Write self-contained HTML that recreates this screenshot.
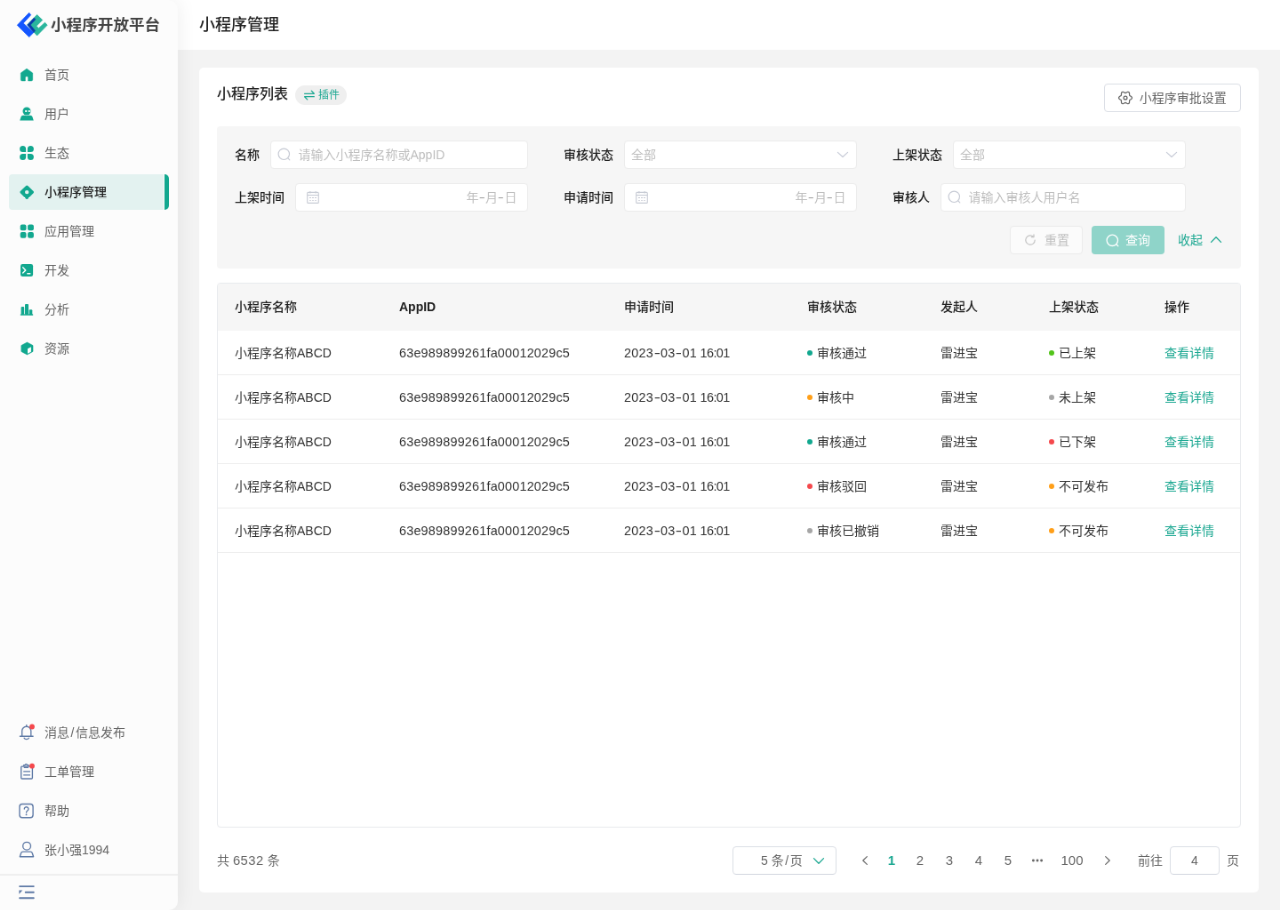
<!DOCTYPE html>
<html lang="zh-CN">
<head>
<meta charset="utf-8">
<title>小程序管理</title>
<style>
*{box-sizing:border-box;margin:0;padding:0}
html,body{width:1280px;height:910px;overflow:hidden;background:#f3f3f3}
body{position:relative}
#app{position:absolute;left:0;top:0;width:1440px;height:1024px;transform:scale(.888889);transform-origin:0 0;will-change:transform;background:#f3f3f3;font-family:"Liberation Sans","Noto Sans CJK SC",sans-serif;font-size:14px;color:#333}
.abs{position:absolute}
i{font-style:normal}
b{font-weight:inherit}
#header{position:absolute;left:0;top:0;width:1440px;height:56px;background:#fff}
#header h1{position:absolute;left:224px;top:0;line-height:56px;font-size:18px;font-weight:500;color:#222}
#side{position:absolute;left:0;top:0;width:200px;height:1024px;background:#fcfcfc;border-radius:0 10px 10px 0;box-shadow:0 0 22px rgba(0,0,0,.07)}
#logo{position:absolute;left:15.75px;top:11.25px;width:40.5px;height:33.75px}
#brand{position:absolute;left:57px;top:0;line-height:56px;font-size:17.6px;font-weight:700;color:#444;white-space:nowrap}
.mi{position:absolute;left:10px;width:180px;height:40px;border-radius:4px;line-height:40px;font-size:14px;color:#666;white-space:nowrap}
.mi svg{position:absolute;left:11px;top:11px;width:18px;height:18px}
.mi span{position:absolute;left:40px;top:0}
.mi.on{background:#e3f2f0;color:#222;font-weight:500}
.mi.on:after{content:"";position:absolute;right:0;top:0;width:5px;height:40px;background:#12a88f;border-radius:0 5px 5px 0}
.mi.on:before{content:"";position:absolute;right:5px;top:0;width:1px;height:40px;background:#fcfcfc}
#sdiv{position:absolute;left:0;top:983.4px;width:200px;height:1.6px;background:#efefef}
#fold{position:absolute;left:20px;top:994px;width:20px;height:20px}
#card{position:absolute;left:224px;top:76px;width:1192px;height:928px;background:#fff;border-radius:5px}
#ctitle{position:absolute;left:20px;top:18px;line-height:24px;font-size:16px;font-weight:500;color:#222}
#tag{position:absolute;left:108px;top:20px;width:58px;height:22px;border-radius:11px;background:#efefef;color:#1ea993;font-size:12px;line-height:22px}
#tag span{position:absolute;left:26px;top:0}
#tag svg{position:absolute;left:10px;top:5px;width:12px;height:12px}
#setbtn{position:absolute;left:1018px;top:18px;width:154px;height:32px;border:1px solid #dcdfe6;border-radius:4px;background:#fff;color:#666;font-size:14px;line-height:30px}
#setbtn span{position:absolute;left:38.7px;top:0;white-space:nowrap}
#setbtn svg{position:absolute;left:15px;top:7px;width:16px;height:16px}
#filter{position:absolute;left:20px;top:66px;width:1152px;height:160px;background:#f6f6f6;border-radius:4px}
.fl{position:absolute;line-height:32px;font-size:14px;font-weight:500;color:#222;white-space:nowrap}
.fi{position:absolute;height:32px;background:#fff;border:1px solid #ececec;border-radius:4px;font-size:14px;line-height:30px;color:#bfbfbf;white-space:nowrap}
.fi svg{position:absolute}
.fi .t{position:absolute;top:0}
.btn{position:absolute;height:32px;border-radius:4px;font-size:14px;line-height:30px;white-space:nowrap}
#table{position:absolute;left:20px;top:242px;width:1152px;height:613px;border:1px solid #e9ebee;border-radius:4px;overflow:hidden}
#thead{position:absolute;left:0;top:0;width:1150px;height:52.8px;background:#f6f6f6;font-weight:500;color:#222;line-height:52px}
.tr{position:absolute;left:0;width:1150px;height:50px;border-bottom:1px solid #eee;line-height:50.4px;color:#333}
.c{position:absolute;top:0;white-space:nowrap}
.c1{left:19px}.c2{left:204px}.c3{left:457px}.c4{left:663px}.c5{left:813px}.c6{left:935px}.c7{left:1065px}
.la{font-size:14.4px;letter-spacing:.2px}.ld{font-size:14.4px;letter-spacing:.28px;word-spacing:-.7px}.hy{display:inline-block;transform:scaleX(1.5);margin:0 1.4px}.tm{letter-spacing:-.6px}
.dot{display:inline-block;width:6px;height:6px;border-radius:50%;vertical-align:middle;margin:-2px 5px 0 0}
.lk{color:#1ea993}
#pager{position:absolute;left:0;top:876px;width:1192px;height:32px;line-height:32px;font-size:14px;color:#666}
#pager .p{position:absolute;top:0;white-space:nowrap}
#pager .n{position:absolute;top:0;width:40px;text-align:center;font-size:15px}
.box{position:absolute;top:0;height:32px;border:1px solid #dcdfe6;border-radius:4px;background:#fff;line-height:30px}
</style>
</head>
<body>
<div id="app">
<div id="header"><h1>小程序管理</h1></div>

<div id="side">
  <svg id="logo" viewBox="14 10 36 30"><path d="M28.84 12.97 L30.6 15.1 L23.0 23.4 L33.3 32.75 L28.84 37.2 L16.97 25.33 Z" fill="#1456ff" stroke="#1456ff" stroke-width=".7" stroke-linejoin="round"/><path d="M36.75 14.95 L42.19 20.22 L36.09 26.32 L38.4 28.46 L44.66 22.69 L46.97 25.33 L36.75 35.72 L27.02 25.0 Z" fill="#2ab69d" stroke="#2ab69d" stroke-width=".7" stroke-linejoin="round"/><path d="M33.78 17.91 L35.43 19.56 L30.3 25.2 L35.1 30.94 L33.45 32.75 L27.02 25.0 Z" fill="#0b3bab" stroke="#0b3bab" stroke-width=".3" stroke-linejoin="round"/></svg>
  <div id="brand">小程序开放平台</div>
  <div class="mi" style="top:64px"><svg viewBox="0 0 18 18" style="" ><path d="M9 2.2 L15.7 7 V14.5 a1.4 1.4 0 0 1 -1.4 1.4 H10.6 V12.3 a1.6 1.6 0 0 0 -3.2 0 V15.9 H3.7 a1.4 1.4 0 0 1 -1.4 -1.4 V7 Z" fill="#12a88f" stroke="#12a88f" stroke-width=".5" stroke-linejoin="round"/></svg><span>首页</span></div>
  <div class="mi" style="top:108px"><svg viewBox="0 0 18 18" style="" ><circle cx="9" cy="6" r="4.5" fill="#12a88f"/><path d="M1.25 16.5 L2.6 12.3 a2.2 2.2 0 0 1 2.1 -1.6 H13.3 a2.2 2.2 0 0 1 2.1 1.6 L16.75 16.5 Z" fill="#12a88f"/><rect x="7.1" y="4.9" width="2.2" height="2" rx=".7" fill="#fff"/><rect x="10.7" y="4.9" width="2.2" height="2" rx=".7" fill="#fff"/><path d="M7.4 10.6 a1.7 .8 0 0 0 3.2 0 Z" fill="#fcfcfc" opacity=".6"/></svg><span>用户</span></div>
  <div class="mi" style="top:152px"><svg viewBox="0 0 18 18" style="" ><path d="M8.1 8.1 H4.6 A3.5 3.5 0 1 1 8.1 4.6 Z M9.9 8.1 H13.4 A3.5 3.5 0 1 0 9.9 4.6 Z M8.1 9.9 H4.6 A3.5 3.5 0 1 0 8.1 13.4 Z M9.9 9.9 H13.4 A3.5 3.5 0 1 1 9.9 13.4 Z" fill="#12a88f"/></svg><span>生态</span></div>
  <div class="mi on" style="top:196px"><svg viewBox="0 0 18 18" style="" ><path fill-rule="evenodd" fill="#12a88f" d="M9.2 1.3 m0 0 M8.1 1.9 a1.6 1.6 0 0 1 2.2 0 L16.5 8 a1.6 1.6 0 0 1 0 2.2 L10.3 16.4 a1.6 1.6 0 0 1 -2.2 0 L1.9 10.2 a1.6 1.6 0 0 1 0 -2.2 Z M9.2 6.9 a2.2 2.2 0 1 0 0 4.4 a2.2 2.2 0 1 0 0 -4.4 Z"/></svg><span>小程序管理</span></div>
  <div class="mi" style="top:240px"><svg viewBox="0 0 18 18" style="" ><g fill="#12a88f"><rect x="1.7" y="1.5" width="6.8" height="6.8" rx="2"/><rect x="10.1" y="1.5" width="6.8" height="6.8" rx="2"/><rect x="1.7" y="9.9" width="6.8" height="6.8" rx="2"/><rect x="10.1" y="9.9" width="6.8" height="6.8" rx="2"/></g></svg><span>应用管理</span></div>
  <div class="mi" style="top:284px"><svg viewBox="0 0 18 18" style="" ><rect x="2" y="1.9" width="14.1" height="14.1" rx="2.3" fill="#12a88f"/><path d="M4.7 5.8 L7.8 8.9 L4.7 12" fill="none" stroke="#fff" stroke-width="1.4" stroke-linecap="round" stroke-linejoin="round"/><path d="M9.8 12.7 H12.8" stroke="#fff" stroke-width="1.4" stroke-linecap="round"/></svg><span>开发</span></div>
  <div class="mi" style="top:328px"><svg viewBox="0 0 18 18" style="" ><g fill="#12a88f"><rect x="2.6" y="6.1" width="3.6" height="9" rx="1"/><rect x="7" y="2.9" width="4" height="12" rx="1"/><rect x="11.7" y="9.2" width="3.6" height="6" rx="1"/><rect x="1.8" y="14.2" width="14.4" height="1.6" rx=".6"/></g></svg><span>分析</span></div>
  <div class="mi" style="top:372px"><svg viewBox="0 0 18 18" style="" ><path d="M9.45 2.1 L16 5.6 V12.4 L9.45 15.9 L2.9 12.4 V5.6 Z" fill="#12a88f" stroke="#12a88f" stroke-width=".6" stroke-linejoin="round"/><path d="M10.0 9.3 L13.9 7.2 V12.7 L10.0 14.8 Z" fill="#fff"/></svg><span>资源</span></div>
  <div class="mi" style="top:804px"><svg viewBox="0 0 18 18" style="overflow:visible" ><g fill="none" stroke="#5f7aa6" stroke-width="1.35" stroke-linecap="round" stroke-linejoin="round"><path d="M3.7 13.2 V7.3 a5.05 5.05 0 0 1 10.1 0 V13.2"/><path d="M1.4 13.2 H16.1"/><path d="M8.75 2.1 V.6"/><path d="M6.1 15.3 a2.8 2 0 0 0 5.3 0"/></g><circle cx="15" cy="2.5" r="2.9" fill="#f5484c"/></svg><span>消息<i style="margin:0 1.6px">/</i>信息发布</span></div>
  <div class="mi" style="top:848px"><svg viewBox="0 0 18 18" style="overflow:visible" ><g fill="none" stroke="#5f7aa6" stroke-width="1.35" stroke-linejoin="round"><rect x="2.7" y="3.1" width="12.7" height="13.9" rx="1"/><path d="M5.7 3.1 V1.6 H7.2 a1.2 1.2 0 0 1 2.3 0 H11 V3.1" /><path d="M5.7 4.4 H11" /><path d="M5.2 8.8 H13 M5.2 12.8 H13"/></g><circle cx="15" cy="2.7" r="2.9" fill="#f5484c"/></svg><span>工单管理</span></div>
  <div class="mi" style="top:892px"><svg viewBox="0 0 18 18" style="overflow:visible" ><g fill="none" stroke="#5f7aa6" stroke-width="1.35" stroke-linecap="round" stroke-linejoin="round"><rect x=".95" y="1.45" width="15.15" height="15.25" rx="3"/><path d="M6.3 7 a2.3 2.3 0 1 1 3.5 2 c-.9 .55 -1.25 1 -1.25 2"/></g><circle cx="8.55" cy="13.4" r=".9" fill="#5f7aa6"/></svg><span>帮助</span></div>
  <div class="mi" style="top:936px"><svg viewBox="0 0 18 18" style="overflow:visible" ><g fill="none" stroke="#5f7aa6" stroke-width="1.35" stroke-linejoin="round"><circle cx="9.1" cy="4.7" r="4.4"/><path d="M1.3 16.7 L2.6 12.7 a2.2 2.2 0 0 1 2.1 -1.6 H13.2 a2.2 2.2 0 0 1 2.1 1.6 L16.6 16.7 Z"/></g></svg><span>张小强1994</span></div>
  <div id="sdiv"></div>
  <svg id="fold" viewBox="0 0 20 20"><g stroke="#5f7aa6" stroke-width="1.9" stroke-linecap="round"><path d="M2.1 3.1 H17.8 M8.7 9.7 H17.8 M2.1 16.3 H17.8"/></g><path d="M1.4 7.4 H5.3 L1.4 11.8 Z" fill="#5f7aa6"/></svg>
</div>

<div id="card">
  <div id="ctitle">小程序列表</div>
  <div id="tag"><svg viewBox="0 0 12 12" style="" ><g fill="none" stroke="#1ea993" stroke-width="1.3" stroke-linecap="round" stroke-linejoin="round"><path d="M.6 4.3 H11.3 L8.3 1.1"/><path d="M11.3 7.7 H.6 L3.7 10.9"/></g></svg><span>插件</span></div>
  <div id="setbtn"><svg viewBox="0 0 16 16" style="overflow:visible" ><path d="M15.45 8.00 L15.29 8.64 L14.84 9.21 L14.23 9.67 L13.59 10.04 L13.06 10.36 L12.72 10.72 L12.57 11.20 L12.56 11.82 L12.56 12.56 L12.47 13.32 L12.20 13.99 L11.73 14.45 L11.09 14.63 L10.38 14.53 L9.67 14.23 L9.03 13.86 L8.49 13.56 L8.00 13.45 L7.51 13.56 L6.97 13.86 L6.33 14.23 L5.62 14.53 L4.91 14.63 L4.28 14.45 L3.80 13.99 L3.53 13.32 L3.44 12.56 L3.44 11.82 L3.43 11.20 L3.28 10.72 L2.94 10.36 L2.41 10.04 L1.77 9.67 L1.16 9.21 L0.71 8.64 L0.55 8.00 L0.71 7.36 L1.16 6.79 L1.77 6.33 L2.41 5.96 L2.94 5.64 L3.28 5.27 L3.43 4.80 L3.44 4.18 L3.44 3.44 L3.53 2.68 L3.80 2.01 L4.27 1.55 L4.91 1.37 L5.62 1.47 L6.33 1.77 L6.97 2.14 L7.51 2.44 L8.00 2.55 L8.49 2.44 L9.03 2.14 L9.67 1.77 L10.38 1.47 L11.09 1.37 L11.73 1.55 L12.20 2.01 L12.47 2.68 L12.56 3.44 L12.56 4.18 L12.57 4.80 L12.72 5.27 L13.06 5.64 L13.59 5.96 L14.23 6.33 L14.84 6.79 L15.29 7.36 L15.45 8.00Z" fill="none" stroke="#666" stroke-width="1.25" stroke-linejoin="round"/><circle cx="8" cy="8" r="1.95" fill="none" stroke="#666" stroke-width="1.25"/></svg><span>小程序审批设置</span></div>

  <div id="filter">
    <div class="fl" style="left:20px;top:16px">名称</div>
    <div class="fi" style="left:60px;top:16px;width:290px"><svg viewBox="0 0 16 16" style="left:7.2px;top:7px;width:16px;height:16px" ><g fill="none" stroke="#c6cad4" stroke-width="1.15" stroke-linecap="round"><circle cx="7.3" cy="7.3" r="6.2"/><path d="M11.9 11.9 L13.8 13.8"/></g></svg><span class="t" style="left:30.5px">请输入小程序名称或AppID</span></div>
    <div class="fl" style="left:390px;top:16px">审核状态</div>
    <div class="fi" style="left:458px;top:16px;width:262px"><span class="t" style="left:7px">全部</span><svg viewBox="0 0 12 6" style="right:9.2px;top:12.2px;width:12px;height:6px;overflow:visible" ><path d="M.4 .4 L6 5.5 L11.6 .4" fill="none" stroke="#c8ccd8" stroke-width="1.15" stroke-linecap="round" stroke-linejoin="round"/></svg></div>
    <div class="fl" style="left:760px;top:16px">上架状态</div>
    <div class="fi" style="left:828px;top:16px;width:262px"><span class="t" style="left:7px">全部</span><svg viewBox="0 0 12 6" style="right:9.2px;top:12.2px;width:12px;height:6px;overflow:visible" ><path d="M.4 .4 L6 5.5 L11.6 .4" fill="none" stroke="#c8ccd8" stroke-width="1.15" stroke-linecap="round" stroke-linejoin="round"/></svg></div>

    <div class="fl" style="left:20px;top:64px">上架时间</div>
    <div class="fi" style="left:88px;top:64px;width:262px"><svg viewBox="0 0 14 14" style="left:11.9px;top:8.3px;width:14px;height:14px;overflow:visible" ><g fill="none" stroke="#c8ccd5" stroke-width="1.1"><rect x=".7" y="1.4" width="12.6" height="12" rx="1"/><path d="M.7 4.5 H13.3"/><path d="M3.9 .1 V2.4 M10.1 .1 V2.4"/><path d="M3.2 7.5 H4.8 M6.2 7.5 H7.8 M9.2 7.5 H10.8 M3.2 10.5 H4.8 M6.2 10.5 H7.8 M9.2 10.5 H10.8" stroke-width=".9"/></g></svg><span class="t" style="right:11.5px">年<i class="hy">-</i>月<i class="hy">-</i>日</span></div>
    <div class="fl" style="left:390px;top:64px">申请时间</div>
    <div class="fi" style="left:458px;top:64px;width:262px"><svg viewBox="0 0 14 14" style="left:11.9px;top:8.3px;width:14px;height:14px;overflow:visible" ><g fill="none" stroke="#c8ccd5" stroke-width="1.1"><rect x=".7" y="1.4" width="12.6" height="12" rx="1"/><path d="M.7 4.5 H13.3"/><path d="M3.9 .1 V2.4 M10.1 .1 V2.4"/><path d="M3.2 7.5 H4.8 M6.2 7.5 H7.8 M9.2 7.5 H10.8 M3.2 10.5 H4.8 M6.2 10.5 H7.8 M9.2 10.5 H10.8" stroke-width=".9"/></g></svg><span class="t" style="right:11.5px">年<i class="hy">-</i>月<i class="hy">-</i>日</span></div>
    <div class="fl" style="left:760px;top:64px">审核人</div>
    <div class="fi" style="left:814px;top:64px;width:276px"><svg viewBox="0 0 16 16" style="left:7.2px;top:7px;width:16px;height:16px" ><g fill="none" stroke="#c6cad4" stroke-width="1.15" stroke-linecap="round"><circle cx="7.3" cy="7.3" r="6.2"/><path d="M11.9 11.9 L13.8 13.8"/></g></svg><span class="t" style="left:30.5px">请输入审核人用户名</span></div>

    <div class="btn" style="left:892px;top:112px;width:82px;border:1px solid #ececec;background:#fbfbfb;color:#c0c0c0"><svg viewBox="0 0 14 14" style="position:absolute;left:14.7px;top:7.5px;width:14px;height:14px;overflow:visible" ><g fill="none" stroke="#c4c4c4" stroke-width="1.2" stroke-linecap="round" stroke-linejoin="round"><path d="M12.2 7 a5.2 5.2 0 1 1 -1.6 -3.75"/><path d="M11 .9 V3.6 H8.3"/></g></svg><span class="abs" style="left:38px;top:0">重置</span></div>
    <div class="btn" style="left:984px;top:112px;width:82px;background:#8fd4c9;color:#fff;line-height:32px"><svg viewBox="0 0 16 16" style="position:absolute;left:15.7px;top:8.7px;width:16px;height:16px" ><g fill="none" stroke="#fff" stroke-width="1.3" stroke-linecap="round"><circle cx="7.3" cy="7.3" r="6.2"/><path d="M11.9 11.9 L13.8 13.8"/></g></svg><span class="abs" style="left:38px;top:0">查询</span></div>
    <div class="btn" style="left:1081px;top:112px;color:#1ea993;line-height:32px">收起<svg viewBox="0 0 12 7" style="position:absolute;left:37.3px;top:12px;width:12px;height:7px;overflow:visible" ><path d="M.5 6.4 L6 .8 L11.5 6.4" fill="none" stroke="#1ea993" stroke-width="1.3" stroke-linecap="round" stroke-linejoin="round"/></svg></div>
  </div>

  <div id="table">
    <div id="thead">
      <span class="c c1">小程序名称</span><span class="c c2" style="font-weight:700">AppID</span><span class="c c3">申请时间</span><span class="c c4">审核状态</span><span class="c c5">发起人</span><span class="c c6">上架状态</span><span class="c c7">操作</span>
    </div>
    <div class="tr" style="top:52.8px"><span class="c c1">小程序名称ABCD</span><span class="c c2 la">63e989899261fa00012029c5</span><span class="c c3 ld">2023<i class="hy">-</i>03<i class="hy">-</i>01 <i class="tm">16:01</i></span><span class="c c4"><i class="dot" style="background:#12a88f"></i>审核通过</span><span class="c c5">雷进宝</span><span class="c c6"><i class="dot" style="background:#52c41a"></i>已上架</span><span class="c c7 lk">查看详情</span></div>
    <div class="tr" style="top:102.8px"><span class="c c1">小程序名称ABCD</span><span class="c c2 la">63e989899261fa00012029c5</span><span class="c c3 ld">2023<i class="hy">-</i>03<i class="hy">-</i>01 <i class="tm">16:01</i></span><span class="c c4"><i class="dot" style="background:#ff9f18"></i>审核中</span><span class="c c5">雷进宝</span><span class="c c6"><i class="dot" style="background:#a6a6a6"></i>未上架</span><span class="c c7 lk">查看详情</span></div>
    <div class="tr" style="top:152.8px"><span class="c c1">小程序名称ABCD</span><span class="c c2 la">63e989899261fa00012029c5</span><span class="c c3 ld">2023<i class="hy">-</i>03<i class="hy">-</i>01 <i class="tm">16:01</i></span><span class="c c4"><i class="dot" style="background:#12a88f"></i>审核通过</span><span class="c c5">雷进宝</span><span class="c c6"><i class="dot" style="background:#f5484c"></i>已下架</span><span class="c c7 lk">查看详情</span></div>
    <div class="tr" style="top:202.8px"><span class="c c1">小程序名称ABCD</span><span class="c c2 la">63e989899261fa00012029c5</span><span class="c c3 ld">2023<i class="hy">-</i>03<i class="hy">-</i>01 <i class="tm">16:01</i></span><span class="c c4"><i class="dot" style="background:#f5484c"></i>审核驳回</span><span class="c c5">雷进宝</span><span class="c c6"><i class="dot" style="background:#ff9f18"></i>不可发布</span><span class="c c7 lk">查看详情</span></div>
    <div class="tr" style="top:252.8px"><span class="c c1">小程序名称ABCD</span><span class="c c2 la">63e989899261fa00012029c5</span><span class="c c3 ld">2023<i class="hy">-</i>03<i class="hy">-</i>01 <i class="tm">16:01</i></span><span class="c c4"><i class="dot" style="background:#a6a6a6"></i>审核已撤销</span><span class="c c5">雷进宝</span><span class="c c6"><i class="dot" style="background:#ff9f18"></i>不可发布</span><span class="c c7 lk">查看详情</span></div>
  </div>

  <div id="pager">
    <span class="p" style="left:20px">共 <i style="font-size:14.8px;letter-spacing:.5px">6532</i> 条</span>
    <div class="box" style="left:600px;width:117px"><span class="abs" style="left:31px;top:0">5 条<i style="margin:0 1.6px">/</i>页</span><svg viewBox="0 0 12 7" style="position:absolute;left:89.7px;top:11.5px;width:12px;height:7px;overflow:visible" ><path d="M.5 .6 L6 6.2 L11.5 .6" fill="none" stroke="#1ea993" stroke-width="1.3" stroke-linecap="round" stroke-linejoin="round"/></svg></div>
    <svg viewBox="0 0 6 10" style="position:absolute;left:745.5px;top:10.8px;width:6px;height:10px;overflow:visible" ><path d="M5.3 .6 L.8 5 L5.3 9.4" fill="none" stroke="#666" stroke-width="1.2" stroke-linecap="round" stroke-linejoin="round"/></svg>
    <span class="n" style="left:759px;color:#1ea993;font-weight:700">1</span>
    <span class="n" style="left:791px">2</span>
    <span class="n" style="left:824px">3</span>
    <span class="n" style="left:857px">4</span>
    <span class="n" style="left:890px">5</span>
    <svg viewBox="0 0 12 4" style="position:absolute;left:937.2px;top:14px;width:12px;height:4px;overflow:visible" ><g fill="#666"><circle cx="1.4" cy="2" r="1.45"/><circle cx="6" cy="2" r="1.45"/><circle cx="10.6" cy="2" r="1.45"/></g></svg>
    <span class="n" style="left:962px">100</span>
    <svg viewBox="0 0 6 10" style="position:absolute;left:1018.9px;top:10.8px;width:6px;height:10px;overflow:visible" ><path d="M.7 .6 L5.2 5 L.7 9.4" fill="none" stroke="#666" stroke-width="1.2" stroke-linecap="round" stroke-linejoin="round"/></svg>
    <span class="p" style="left:1056px">前往</span>
    <div class="box" style="left:1092px;width:56px;text-align:center">4</div>
    <span class="p" style="left:1156px">页</span>
  </div>
</div>
</div>
</body>
</html>
